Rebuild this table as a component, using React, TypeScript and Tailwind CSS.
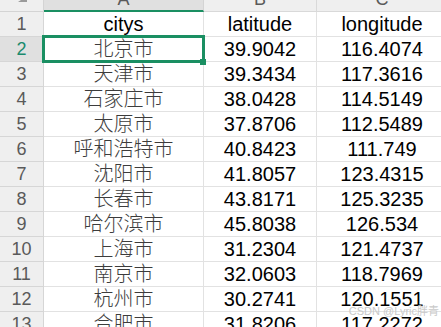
import React from "react";

const rows: [string, string, string][] = [
  ["citys", "latitude", "longitude"],
  ["北京市", "39.9042", "116.4074"],
  ["天津市", "39.3434", "117.3616"],
  ["石家庄市", "38.0428", "114.5149"],
  ["太原市", "37.8706", "112.5489"],
  ["呼和浩特市", "40.8423", "111.749"],
  ["沈阳市", "41.8057", "123.4315"],
  ["长春市", "43.8171", "125.3235"],
  ["哈尔滨市", "45.8038", "126.534"],
  ["上海市", "31.2304", "121.4737"],
  ["南京市", "32.0603", "118.7969"],
  ["杭州市", "30.2741", "120.1551"],
  ["合肥市", "31.8206", "117.2272"],
];

const latin = { fontFamily: '"Liberation Sans", Arial, sans-serif' };
const cjk = { fontFamily: '"Liberation Sans", "Noto Sans CJK SC", sans-serif' };

export default function App() {
  return (
    <div className="relative h-[327px] w-[441px] overflow-hidden bg-white">
      <div className="-mt-[18px] grid grid-cols-[44px_160px_113px_130px]" style={latin}>
        {/* column headers */}
        <div className="relative h-[30px] border-r border-b border-[#d4d4d4] bg-[#efefef]">
          <div className="absolute bottom-[9px] left-[18px] h-[6px] w-[9px] bg-[#9a9a9a] [clip-path:polygon(100%_0,100%_100%,0_100%)]" />
        </div>
        <div className="flex h-[30px] items-end justify-center border-r border-[#d4d4d4] border-b-2 border-b-[#1a8f62] bg-[#e0e0e0] pb-[2px] text-[18px] leading-none text-[#5a5a5a]">A</div>
        <div className="flex h-[30px] items-end justify-center border-r border-b border-[#d9d9d9] bg-[#efefef] pb-[3px] text-[18px] leading-none text-[#5a5a5a]">B</div>
        <div className="flex h-[30px] items-end justify-center border-b border-[#d9d9d9] bg-[#efefef] pb-[3px] text-[18px] leading-none text-[#5a5a5a]">C</div>

        {rows.map((r, i) => {
          const active = i === 1;
          return (
            <React.Fragment key={i}>
              <div
                className={`flex h-[25px] items-center justify-center border-r border-b border-[#d6d6d6] text-[18px] ${
                  active ? "bg-[#e0e0e0] text-[#1b8a6e]" : "bg-[#efefef] text-[#5a5a5a]"
                }`}
              >
                {i + 1}
              </div>
              <div
                className={`flex h-[25px] items-center justify-center border-r border-b border-[#e2e2e2] text-[20px] leading-[25px] ${
                  i === 0 ? "text-black" : "font-light text-[#3c3c3c]"
                }`}
                style={i === 0 ? latin : cjk}
              >
                {r[0]}
              </div>
              <div className="flex h-[25px] items-center justify-center border-r border-b border-[#e2e2e2] text-[20px] leading-[25px] text-black">
                {r[1]}
              </div>
              <div className="flex h-[25px] items-center justify-center border-b border-[#e2e2e2] text-[20px] leading-[25px] text-black">
                {r[2]}
              </div>
            </React.Fragment>
          );
        })}
      </div>

      {/* selection box */}
      <div className="absolute left-[42px] top-[35px] h-[28px] w-[163px] border-[3px] border-[#1a8f62]" />
      <div className="absolute left-[200px] top-[59px] h-[6px] w-[6px] bg-[#1a8f62]" />

      {/* watermark */}
      <div
        className="absolute right-[2px] top-[306px] text-[11px] leading-none text-[#c9c9c9]"
        style={cjk}
      >
        CSDN @Lyric胖青
      </div>
    </div>
  );
}
